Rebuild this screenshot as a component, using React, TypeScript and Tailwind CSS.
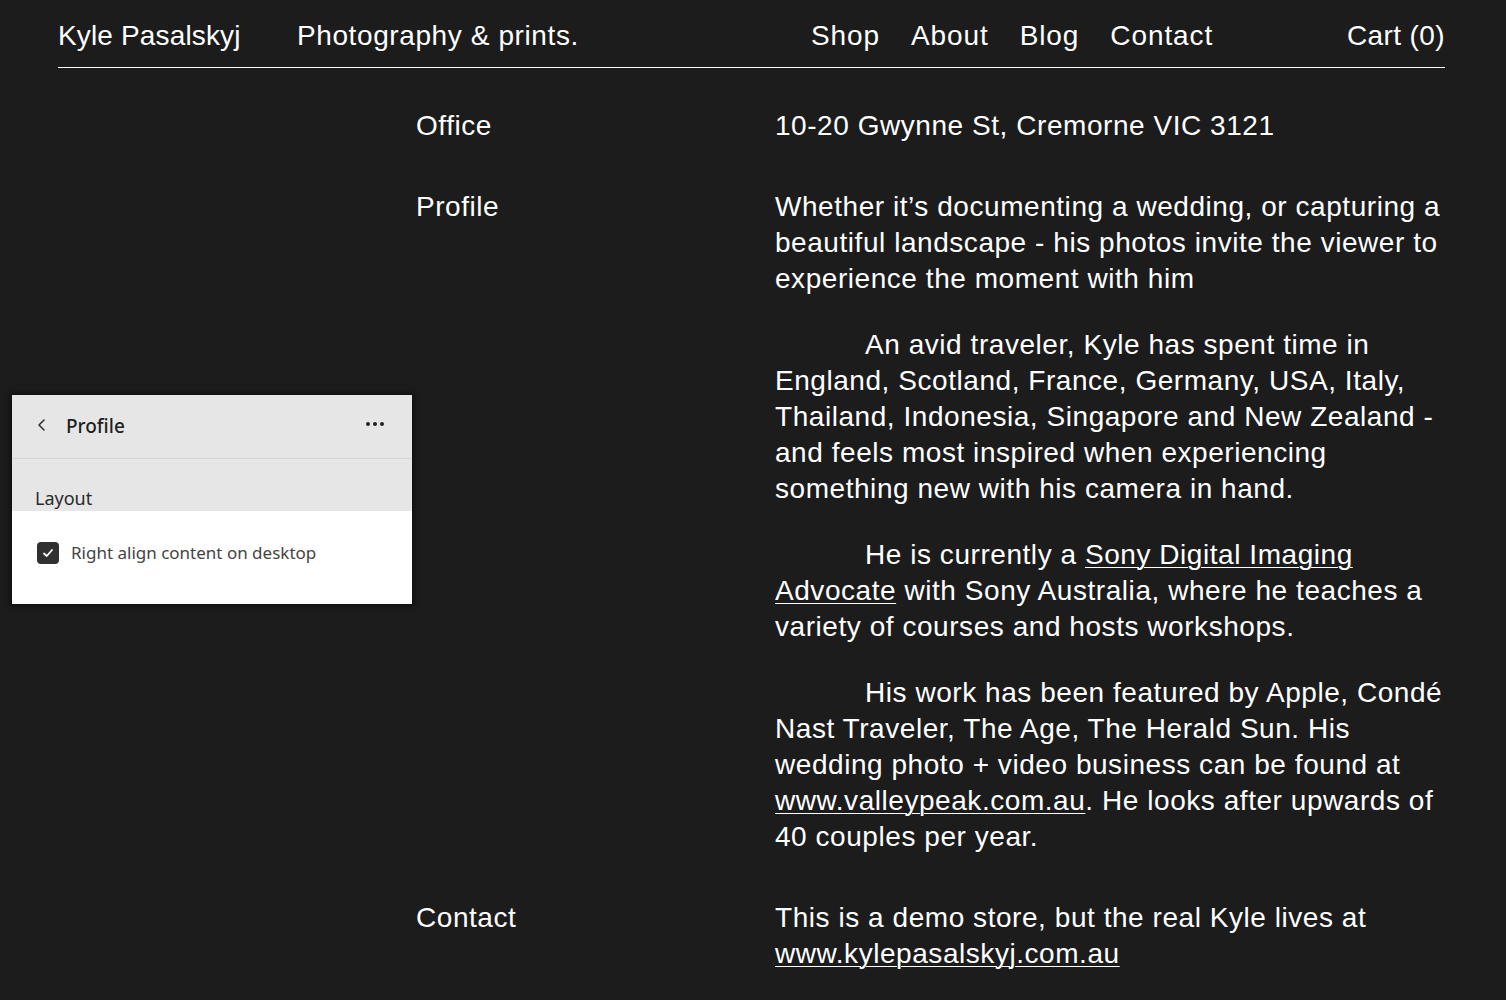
import React from "react";

const sans = { fontFamily: '"Liberation Sans", Arial, Helvetica, sans-serif' };
const ui = { fontFamily: '"Noto Sans", "Open Sans", sans-serif' };

function Row({ label, children, className = "" }: { label: string; children: React.ReactNode; className?: string }) {
  return (
    <div className={"grid grid-cols-[359px_670px] " + className}>
      <div>{label}</div>
      <div className="flex flex-col gap-[30px]">{children}</div>
    </div>
  );
}

function Link({ children }: { children: React.ReactNode }) {
  return <a className="underline decoration-1 underline-offset-[3px]" href="#">{children}</a>;
}

export default function App() {
  return (
    <div className="relative min-h-[1000px] w-full bg-[#1c1c1c] text-white overflow-hidden" style={sans}>
      <header className="mx-[58px] w-[1387px] flex items-center pt-[18px] pb-[13px] border-b border-white text-[28px] leading-[36px]">
        <div className="w-[239px] tracking-[0.15px]">Kyle Pasalskyj</div>
        <div className="w-[514px] tracking-[0.6px]">Photography &amp; prints.</div>
        <nav className="flex gap-[31px] tracking-[0.9px]">
          <a href="#">Shop</a>
          <a href="#">About</a>
          <a href="#">Blog</a>
          <a href="#">Contact</a>
        </nav>
        <div className="ml-auto tracking-[0.4px]">Cart (0)</div>
      </header>

      <main className="pl-[416px] pt-[40px] text-[28px] leading-[36px] tracking-[0.55px] flex flex-col gap-[45px]">
        <Row label="Office">
          <p>10-20 Gwynne St, Cremorne VIC 3121</p>
        </Row>
        <Row label="Profile">
          <p>Whether it’s documenting a wedding, or capturing a beautiful landscape - his photos invite the viewer to experience the moment with him</p>
          <p className="indent-[90px]">
            An avid traveler, Kyle has spent time in England, Scotland, France, Germany, USA, Italy, Thailand, Indonesia, Singapore and New Zealand - and feels most inspired when experiencing something new with his camera in hand.
          </p>
          <p className="indent-[90px]">
            He is currently a <Link>Sony Digital Imaging Advocate</Link> with Sony Australia, where he teaches a variety of courses and hosts workshops.
          </p>
          <p className="indent-[90px]">
            His work has been featured by Apple, Condé Nast Traveler, The Age, The Herald Sun. His wedding photo + video business can be found at <Link>www.valleypeak.com.au</Link>. He looks after upwards of 40 couples per year.
          </p>
        </Row>
        <Row label="Contact">
          <p>
            This is a demo store, but the real Kyle lives at <Link>www.kylepasalskyj.com.au</Link>
          </p>
        </Row>
      </main>

      <div
        className="absolute left-[12px] top-[395px] w-[400px] h-[209px] bg-white shadow-[0_0_6px_2px_rgba(0,0,0,0.5)] flex flex-col"
        style={ui}
      >
        <div className="h-[64px] bg-[#e6e6e6] border-b border-[#d4d4d4] flex items-center px-[24px] text-[#1f1f1f]">
          <svg width="12" height="14" viewBox="0 0 12 14" className="mr-[18px] mt-[-4px]">
            <path d="M8 2 L3 7 L8 12" fill="none" stroke="#333" strokeWidth="1.6" strokeLinecap="round" strokeLinejoin="round" />
          </svg>
          <span className="text-[19px] leading-[24px] font-medium mt-[-2px]">Profile</span>
          <div className="ml-auto mr-[4px] flex gap-[3px] mt-[-6px]">
            <span className="w-[4px] h-[4px] rounded-full bg-[#222]"></span>
            <span className="w-[4px] h-[4px] rounded-full bg-[#222]"></span>
            <span className="w-[4px] h-[4px] rounded-full bg-[#222]"></span>
          </div>
        </div>
        <div className="h-[52px] bg-[#e6e6e6] flex items-end pb-[1px] px-[23px]">
          <span className="text-[18px] leading-[24px] text-[#2a2a2a]">Layout</span>
        </div>
        <div className="flex-1 bg-white flex items-start pt-[31px] px-[25px]">
          <div className="flex items-center gap-[12px]">
            <span className="w-[22px] h-[22px] rounded-[4px] bg-[#303030] flex items-center justify-center">
              <svg width="14" height="14" viewBox="0 0 14 14">
                <path d="M3 7.5 L5.8 10 L11 4" fill="none" stroke="#fff" strokeWidth="1.8" strokeLinecap="round" strokeLinejoin="round" />
              </svg>
            </span>
            <span className="text-[17px] leading-[22px] text-[#444]">Right align content on desktop</span>
          </div>
        </div>
      </div>
    </div>
  );
}
